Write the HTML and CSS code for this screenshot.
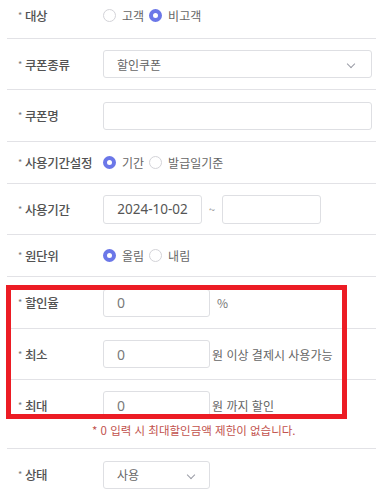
FILE: index.html
```html
<!DOCTYPE html>
<html lang="ko">
<head>
    <meta charset="UTF-8">
    <meta name="viewport" content="width=device-width, initial-scale=1.0">
    <title>쿠폰 등록</title>
    <link rel="stylesheet" href="styles.css">
</head>
<body>
    <div class="form">
        <div class="row row-first">
            <div class="label"><span class="req">*</span>대상</div>
            <div class="field">
                <label class="radio"><span class="dot"></span>고객</label>
                <label class="radio checked"><span class="dot"></span>비고객</label>
            </div>
        </div>
        <div class="row">
            <div class="label"><span class="req">*</span>쿠폰종류</div>
            <div class="field">
                <div class="select wide">할인쿠폰<span class="chevron"></span></div>
            </div>
        </div>
        <div class="row row-tall">
            <div class="label"><span class="req">*</span>쿠폰명</div>
            <div class="field">
                <div class="input wide"></div>
            </div>
        </div>
        <div class="row row-radio">
            <div class="label"><span class="req">*</span>사용기간설정</div>
            <div class="field">
                <label class="radio checked"><span class="dot"></span>기간</label>
                <label class="radio"><span class="dot"></span>발급일기준</label>
            </div>
        </div>
        <div class="row">
            <div class="label"><span class="req">*</span>사용기간</div>
            <div class="field">
                <div class="input date">2024-10-02</div>
                <span class="tilde">~</span>
                <div class="input date"></div>
            </div>
        </div>
        <div class="row row-radio">
            <div class="label"><span class="req">*</span>원단위</div>
            <div class="field">
                <label class="radio checked"><span class="dot"></span>올림</label>
                <label class="radio"><span class="dot"></span>내림</label>
            </div>
        </div>
        <div class="row row-tall">
            <div class="label"><span class="req">*</span>할인율</div>
            <div class="field">
                <div class="input num">0</div>
                <span class="unit pct">%</span>
            </div>
        </div>
        <div class="row">
            <div class="label"><span class="req">*</span>최소</div>
            <div class="field">
                <div class="input num">0</div>
                <span class="unit">원 이상 결제시 사용가능</span>
            </div>
        </div>
        <div class="row row-note">
            <div class="line">
                <div class="label"><span class="req">*</span>최대</div>
                <div class="field">
                    <div class="input num">0</div>
                    <span class="unit">원 까지 할인</span>
                </div>
            </div>
            <div class="note">* 0 입력 시 최대할인금액 제한이 없습니다.</div>
        </div>
        <div class="row row-last">
            <div class="label"><span class="req">*</span>상태</div>
            <div class="field">
                <div class="select short">사용<span class="chevron"></span></div>
            </div>
        </div>
    </div>
    <div class="highlight"></div>
</body>
</html>
```

FILE: styles.css
```css
body {
    margin: 0;
    background: #ffffff;
    color: #4a4a4a;
    font-family: "Noto Sans CJK KR", "Noto Sans", sans-serif;
    font-size: 12px;
}

.form {
    margin-left: 7px;
}

.row {
    display: flex;
    align-items: center;
    box-sizing: border-box;
    min-height: 51px;
    border-bottom: 1px solid #e2e2e6;
}
.row-first {
    min-height: 39px;
    padding-bottom: 7px;
}
.row-tall {
    min-height: 52px;
}
.row-radio {
    min-height: 42px;
}
.row-note {
    display: block;
    min-height: 69px;
    padding-top: 11px;
}
.row-last {
    border-bottom: none;
}

.line {
    display: flex;
    align-items: center;
}

.label {
    width: 85px;
    padding-left: 11px;
    flex-shrink: 0;
    font-size: 12.5px;
    font-weight: 500;
    color: #525252;
    white-space: nowrap;
    letter-spacing: -0.3px;
}
.req {
    color: #777;
    font-size: 9px;
    font-weight: 400;
    margin-right: 3px;
    vertical-align: 2px;
}

.field {
    display: flex;
    align-items: center;
}

/* radio buttons */
.radio {
    display: flex;
    align-items: center;
    margin-right: 5px;
    color: #666;
    font-size: 12px;
}
.dot {
    box-sizing: border-box;
    width: 13px;
    height: 13px;
    border: 1px solid #d3d3d8;
    border-radius: 50%;
    margin-right: 6px;
    background: #fff;
}
.radio.checked .dot {
    border: 4px solid #6b77e8;
    background: #fff;
}

/* inputs */
.input, .select {
    box-sizing: border-box;
    height: 28px;
    border: 1px solid #dedfe3;
    border-radius: 3px;
    background: #fff;
    color: #666;
    display: flex;
    align-items: center;
}
.wide {
    width: 269px;
}
.select {
    position: relative;
    padding-left: 13px;
    font-size: 12px;
}
.select.short {
    width: 107px;
}
.chevron {
    position: absolute;
    right: 17px;
    top: 10px;
    width: 5px;
    height: 5px;
    border-right: 1px solid #9a9ca6;
    border-bottom: 1px solid #9a9ca6;
    transform: rotate(45deg);
}
.select.short .chevron {
    right: 15px;
}
.date {
    width: 99px;
    height: 29px;
    justify-content: center;
    font-family: "Noto Sans", sans-serif;
    font-size: 13.5px;
    color: #555;
}
.tilde {
    width: 20px;
    text-align: center;
    color: #888;
    font-size: 11px;
}
.num {
    width: 107px;
    padding-left: 13px;
    font-family: "Noto Sans", sans-serif;
    font-size: 14px;
    color: #7a7a7a;
}
.unit {
    margin-left: 2px;
    color: #666;
    font-size: 12px;
}
.unit.pct {
    margin-left: 7px;
    color: #777;
}

.note {
    margin-top: 4px;
    padding-left: 85px;
    color: #c2524d;
    font-size: 11.5px;
    line-height: 14px;
}

/* red box drawn over the discount rows */
.highlight {
    position: absolute;
    left: 6px;
    top: 285px;
    width: 341px;
    height: 134px;
    box-sizing: border-box;
    border: 5px solid #ec1c24;
}
```
